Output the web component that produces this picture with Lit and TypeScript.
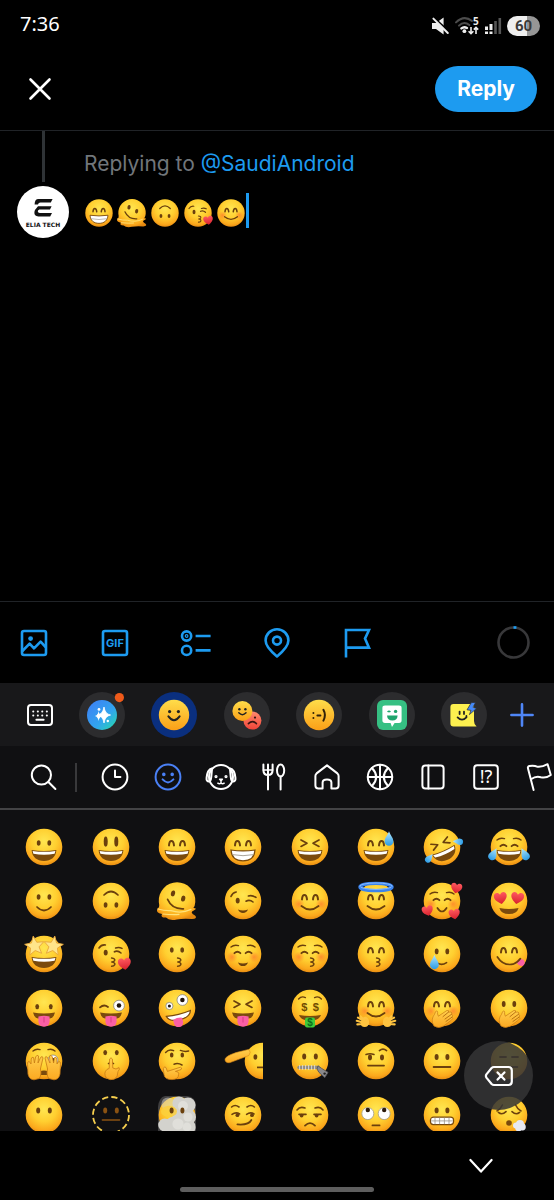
import { LitElement, html, svg, css } from "lit";
import { customElement } from "lit/decorators.js";

const INK = "#6b400d";

const ovals = (x = 5.3, y = -4, rx = 1.9, ry = 2.8) => svg`
  <ellipse cx=${-x} cy=${y} rx=${rx} ry=${ry} fill=${INK} />
  <ellipse cx=${x} cy=${y} rx=${rx} ry=${ry} fill=${INK} />`;

const line = (d: string, width = 1.6, color = INK) => svg`
  <path d=${d} fill="none" stroke=${color} stroke-width=${width} stroke-linecap="round" stroke-linejoin="round" />`;

const arches = line("M-8 -1.6C-7.6 -7.4 -3.6 -7.4 -3 -1.6M3 -1.6C3.6 -7.4 7.6 -7.4 8 -1.6", 2);
const lids = line("M-8.6 -0.8Q-5.6 -3.6 -2.6 -0.8M2.6 -0.8Q5.6 -3.6 8.6 -0.8", 1.8);
const brows = line("M-12 -7Q-9 -9.6 -4.5 -8.4M12 -7Q9 -9.6 4.5 -8.4", 1.4);
const squeezed = line("M-9 -7L-3 -3.8L-9 -0.6M9 -7L3 -3.8L9 -0.6", 1.7);
const grin = svg`
  <path d="M-12.4 3Q0 4.8 12.4 3C12 10 7 14 0 14S-12 10 -12.4 3Z" fill="#7a4a0d" />
  <path d="M-11.4 3.9Q0 5.6 11.4 3.9L10.6 6.8Q0 8.8 -10.6 6.8Z" fill="#fff" />`;
const smile = (y = 5, w = 8) => line(`M${-w} ${y}Q0 ${y + 7} ${w} ${y}`, 1.7);
const pucker = line("M0.6 4Q4.6 4.6 3.6 6.6Q2.8 7.8 0.8 8Q4.4 8.6 3.8 10.6Q3 12.2 0.6 12.2", 1.5);
const tongue = svg`
  <path d="M-11 4.6Q0 6.6 11 4.6Q10 9.6 6 10.6H-6Q-10 9.6 -11 4.6Z" fill="#7a4a0d" />
  <path d="M-5.6 8.6Q0 7 5.6 8.6V13.6Q5 18.8 0 18.8T-5.6 13.6Z" fill="#fa5fa5" />
  <path d="M0 9V14.5" stroke="#d93c83" stroke-width="1" />`;
const blush = svg`
  <circle cx="-11" cy="3" r="5.5" fill="url(#blush)" /><circle cx="11" cy="3" r="5.5" fill="url(#blush)" />`;
const heart = (x: number, y: number, s: number, turn = 0) => svg`
  <path transform="translate(${x} ${y}) rotate(${turn}) scale(${s})"
    d="M0 5.4C-3 3.2 -5.6 1.2 -5.6 -1.8C-5.6 -5.2 -1.4 -6 0 -2.8C1.4 -6 5.6 -5.2 5.6 -1.8C5.6 1.2 3 3.2 0 5.4Z" fill="url(#heart)" />`;
const drop = (x: number, y: number, s: number, turn = 0) => svg`
  <path transform="translate(${x} ${y}) rotate(${turn}) scale(${s})"
    d="M0 -7C1.5 -3 4.2 -0.5 4.2 2.6A4.2 4.2 0 0 1 -4.2 2.6C-4.2 -0.5 -1.5 -3 0 -7Z" fill="url(#drop)" />`;
const star = (x: number, turn: number) => svg`
  <path transform="translate(${x} -8) rotate(${turn})"
    d="M0 -10L2.7 -3.4L9.6 -3L4.3 1.5L6 8.2L0 4.6L-6 8.2L-4.3 1.5L-9.6 -3L-2.7 -3.4Z"
    fill="#ffe58a" stroke="#e8a83c" stroke-width="0.9" stroke-linejoin="round" />`;
const googly = (x: number, y: number, r: number) => svg`
  <circle cx=${x} cy=${y} r=${r} fill="#fff" stroke="#8a857a" stroke-width="0.8" />
  <circle cx=${x} cy=${y} r=${r * 0.42} fill="#20160c" />`;
const palm = svg`
  <path d="M-8 18C-11 13 -9.5 9 -7.6 6.6L-6.4 3.6Q-4 1.6 -4.4 6L-3.6 8.2L5 2.4Q7.4 2 6.4 4.2L9 4Q10.8 4.8 9.4 6.4Q11.8 6.8 10 9.2Q11.8 10.4 9.6 12L1.6 18Q-3.4 21 -8 18Z"
    fill="url(#hand)" stroke="#c87a14" stroke-width="0.7" />
  <path d="M6.4 4.2L1 8.6M9.4 6.4L3 11M10 9.2L4 13.4" stroke="#b06a10" stroke-width="0.9" fill="none" stroke-linecap="round" />`;
const disc = svg`<circle r="18.3" fill="url(#face)" />`;

const faces: Record<string, unknown> = {
  "grinning face": svg`${disc}${ovals()}${grin}`,
  "grinning face with big eyes": svg`${disc}${ovals(5.3, -5.4, 2, 5.2)}${grin}`,
  "grinning face with smiling eyes": svg`${disc}${arches}${grin}`,
  "beaming face": svg`${disc}${arches}
    <path d="M-12 3Q0 4.8 12 3C11.6 10 7 13.8 0 13.8S-11.6 10 -12 3Z" fill="#fff" stroke="#7a4a0d" stroke-width="1.2" />
    <path d="M-10.6 7.6Q0 9.8 10.6 7.6" fill="none" stroke="#a9a49b" stroke-width="1" />`,
  "squinting face": svg`${disc}${squeezed}${grin}`,
  "grinning face with sweat": svg`${disc}${arches}${grin}${drop(13, -8.4, 1.05)}`,
  "rolling on the floor laughing": svg`${disc}<g transform="rotate(-24)">${squeezed}${grin}</g>
    ${drop(-12.6, 11, 0.75, 40)}${drop(16, -5.4, 0.75, -85)}`,
  "face with tears of joy": svg`${disc}${brows}${lids}${grin}${drop(-15.6, 7, 0.95, 28)}${drop(15.6, 7, 0.95, -28)}`,
  "slightly smiling face": svg`${disc}${ovals(5.4, -4, 1.9, 2.8)}${smile(6, 7)}`,
  "upside-down face": svg`${disc}<g transform="rotate(180)">${ovals(5.4, -4, 1.9, 2.8)}${smile(6, 7)}</g>`,
  "melting face": svg`
    <path d="M-18.2 1A18.3 18.3 0 1 1 18.3 1Q18 5 16.4 7Q21 7.4 16.8 9.4Q12 11 18 14.4Q21 17.4 15 18Q6 17.4 0 18.4Q-8 20 -11 16.6Q-17 16.8 -15 13Q-22 11.4 -19.4 7.4Q-17 7 -18.2 1Z" fill="url(#face)" />
    <path d="M-19 8Q-12 10 -6 9.6Q4 13 14 8.4M-14 13Q-4 14 2 13.4" fill="none" stroke="#ffe27a" stroke-width="1.2" stroke-linecap="round" />
    <ellipse cx="-4" cy="-7.6" rx="2.1" ry="3" fill=${INK} transform="rotate(12 -4 -7.6)" />
    <ellipse cx="6.2" cy="-2.4" rx="2.1" ry="3" fill=${INK} transform="rotate(12 6.2 -2.4)" />
    ${line("M-9.4 -1.6Q-5 8.4 6.4 7.8", 1.7)}`,
  "winking face": svg`${disc}<ellipse cx="-5.3" cy="-0.4" rx="2" ry="2.9" fill=${INK} />
    ${line("M3 0.2Q6.6 -1.8 10 1M-12 -4.6Q-10.4 -8.4 -6.8 -9M5.4 -5Q9 -6.2 13 -3.6", 1.6)}
    <path d="M-5 8.6Q0 10.4 5 8.6Q3.6 12 0 12T-5 8.6Z" fill=${INK} />`,
  "smiling face with smiling eyes": svg`${disc}${blush}${arches}${smile(5, 8.6)}`,
  "smiling face with halo": svg`${disc}${arches}${smile(5, 8.6)}
    <ellipse cy="-14" rx="16" ry="3.6" fill="none" stroke="#3b84ee" stroke-width="3.4" />
    <ellipse cy="-14.8" rx="16.2" ry="3.2" fill="none" stroke="#8cc0ff" stroke-width="0.9" />`,
  "smiling face with hearts": svg`${disc}${blush}${brows}${lids}${smile(7, 4.6)}
    ${heart(14.4, -13, 1, 12)}${heart(-14.4, 9.6, 1, -14)}${heart(12.4, 13, 1, -8)}`,
  "smiling face with heart-eyes": svg`${disc}
    <path d="M-9.6 7Q0 8.8 9.6 7Q8 13 0 13T-9.6 7Z" fill="#7a4a0d" />${heart(-8.4, -3, 1.15, -10)}${heart(8.4, -3, 1.15, 10)}`,
  "star-struck": svg`${disc}${grin}${star(-9.4, -8)}${star(9.4, 8)}`,
  "face blowing a kiss": svg`${disc}<ellipse cx="-5.3" cy="-1.4" rx="2" ry="2.9" fill=${INK} />
    ${line("M3.4 -2.2Q6.6 -4 10 -1M-12 -6Q-9.6 -9.6 -5.6 -9M4.6 -6Q8 -7.2 11 -5.6", 1.6)}${pucker}${heart(13.6, 9.6, 1.15, -8)}`,
  "kissing face": svg`${disc}${ovals(5.2, -4, 1.9, 2.7)}${pucker}`,
  "smiling face, relaxed": svg`${disc}${blush}${brows}${lids}<path d="M-5 8.4Q0 10.4 5 8.4Q3.6 12 0 12T-5 8.4Z" fill=${INK} />`,
  "kissing face with closed eyes": svg`${disc}${blush}${brows}${lids}${pucker}`,
  "kissing face with smiling eyes": svg`${disc}${arches}${pucker}`,
  "smiling face with tear": svg`${disc}${ovals(5.3, -2.6, 1.9, 2.8)}${line("M-4 9.4Q0 11.6 4.6 8.6", 1.6)}${drop(-7.6, 8, 1.05)}`,
  "face savoring food": svg`${disc}${arches}
    <path d="M7 8.2Q9.6 3.4 14.2 5.6Q17.4 8.8 14 11.8Q10 12.4 7 8.2Z" fill="#fa5fa5" />${line("M-11.6 3Q-6 12 4 10.2Q8.4 9 11.4 4.6", 1.7)}`,
  "face with tongue": svg`${disc}${ovals(6.8, -1.4, 1.9, 2.7)}${tongue}`,
  "winking face with tongue": svg`${disc}${line("M-11 -0.6Q-7 -4.2 -3 -1", 1.8)}${googly(8, -2.4, 5.4)}${tongue}`,
  "zany face": svg`${disc}${googly(-7.6, -2, 3.6)}${googly(5.4, -8, 5.4)}
    <g transform="rotate(-14)"><path d="M-12.4 5.6Q0 7.4 12.4 5.6Q10.6 12 0 12T-12.4 5.6Z" fill="#fff" stroke="#7a4a0d" stroke-width="1.2" />
    <path d="M-6.6 10.6Q-2 9 2.6 10.6V15Q1.4 19.6 -2.4 19T-6.6 15Z" fill="#fa5fa5" /></g>`,
  "squinting face with tongue": svg`${disc}${squeezed}${tongue}`,
  "money-mouth face": svg`${disc}${line("M-11.4 -9Q-8.4 -12.4 -4.6 -10.4M4.6 -10.4Q8.4 -12.4 11.4 -9", 1.4)}
    <text class="money" x="-5.8" y="3" fill="#6f4b00">$</text><text class="money" x="5.8" y="3" fill="#6f4b00">$</text>
    <path d="M-11 7Q0 9 11 7Q9 11.6 5 12H-5Q-9 11.6 -11 7Z" fill="#7a4a0d" />
    <rect x="-5" y="9.4" width="10" height="10" rx="2" fill="#3fca3a" /><text class="bill" x="0" y="18" fill="#0c6d1a">$</text>`,
  "smiling face with open hands": svg`${disc}${blush}${arches}${smile(5, 8.6)}
    ${[-1, 1].map((side) => svg`<g transform="scale(${side} 1)">
      <path d="M8 16Q7.6 10.6 10.6 9.8Q12.4 9.8 12.4 11.6L15.6 8.2M13 12.4L18 9.6M14 14.2L19.2 12.8M14 16L18.6 16.4" fill="none" stroke="#ffc440" stroke-width="2.2" stroke-linecap="round" />
      <ellipse cx="11.4" cy="15" rx="4" ry="4" fill="#ffc440" /></g>`)}`,
  "face with hand over mouth, smiling": svg`${disc}${blush}${arches}${palm}`,
  "face with hand over mouth": svg`${disc}${ovals(5.3, -4, 1.9, 3)}${palm}`,
  "face with peeking eye": svg`${disc}${line("M-11 -10Q-8 -12.6 -4 -11.4M4 -11.4Q8 -12.6 11 -10", 1.4)}
    ${googly(9, -1, 5)}<path d="M-4 10.4Q0 8.4 4 10.4V14H-4Z" fill="#7a4a0d" />
    ${[-1, 1].map((side) => svg`<g transform="scale(${side} 1)">
      <path d="M5 17.6Q2 14 3.6 8L1 -3Q1.4 -5.6 3.4 -3.6L6 2L5.4 -5Q7 -7 8.4 -4L9.6 2L10.4 -3.4Q12.4 -4.6 12.8 -2L13 3L14.8 0.4Q17 0.6 16.4 3.6L16 13Q15 18.6 10 18.8Z"
        fill="url(#hand)" stroke="#c87a14" stroke-width="0.8" /></g>`)}`,
  "shushing face": svg`${disc}${ovals(5.8, -8.4, 1.9, 2.6)}${line("M-2.6 2.6Q0 1 2.6 2.6", 1.4)}
    <path d="M-1.4 -2Q0 -4.4 1.4 -2L1.8 7L5 8L8 6.6Q9.2 8 7 10.6Q7 16 3.4 18.2Q-1 19.6 -4.6 17Q-8 12 -4 8.4L-1.8 7.4Z" fill="url(#hand)" stroke="#c87a14" stroke-width="0.8" />`,
  "thinking face": svg`${disc}${ovals(5.3, -6, 1.8, 2.6)}${line("M-11.4 -8.6Q-8 -12.4 -3.4 -10.4M3.4 -10.6Q8 -9 11.6 -10", 1.5)}
    ${line("M-3 3.2Q1 1.6 5 4", 1.5)}
    <path d="M-13.6 7.6Q-12.6 4.6 -11 6.6L-9.6 10.4L3.4 6.2Q5.6 6.6 4 8.6L-1.6 10.4Q2.4 10.8 1.6 13.4Q1.6 18.4 -5 18.6Q-12.4 18.6 -13 13.6Z" fill="url(#hand)" stroke="#c87a14" stroke-width="0.8" />`,
  "saluting face": svg`
    <path d="M20 -18.3A18.3 18.3 0 0 0 20 18.3Z" fill="url(#halfface)" />
    <ellipse cx="12.4" cy="-4" rx="1.9" ry="2.8" fill=${INK} /><path d="M14 6.4H20" stroke=${INK} stroke-width="1.7" />
    <path d="M5.6 -11.6L-7 -8.4Q-17 -5 -18 -2Q-18 2.4 -13 1.6L-5 -1.4L6 -5.6Q8.6 -9 5.6 -11.6Z" fill="url(#hand)" stroke="#d98c18" stroke-width="0.6" />`,
  "zipper-mouth face": svg`${disc}${ovals(5.8, -4.4, 2, 3)}
    ${line("M-11 6.4H8", 3.4, "#8f8a80")}${line("M-10.4 4.4V8.6M-7.4 4.4V8.6M-4.4 4.4V8.6M-1.4 4.4V8.6M1.6 4.4V8.6M4.6 4.4V8.6", 1, "#d9d6cf")}
    <path d="M8 4.8L11.6 7.4L18 11.4L14.8 16.6L9 11.4L7 8Z" fill="#88888c" stroke="#55555a" stroke-width="0.9" /><circle cx="14.6" cy="12.6" r="1.2" fill="#222" />`,
  "face with raised eyebrow": svg`${disc}${ovals(6, -3.6, 2, 2.8)}${line("M-10 -6.6Q-6 -8 -2 -6.6M3.4 -10.4Q7 -13.4 10.6 -10.4", 1.6)}${line("M-8 4.6H8", 1.8)}`,
  "neutral face": svg`${disc}${ovals(5.4, -4, 2, 3)}${line("M-8.4 6H8.4", 1.8)}`,
  "expressionless face": svg`${disc}${line("M-9 -4H-3M3 -4H9M-8.4 6H8.4", 1.8)}`,
  "face without mouth": svg`${disc}${ovals(5.8, -4.4, 2, 3)}`,
  "dotted line face": svg`<circle r="18" fill="none" stroke="#f6cf4e" stroke-width="1.8" stroke-dasharray="6.2 3.2" />
    <ellipse cx="-5.8" cy="-4.4" rx="2" ry="3" fill="#8a5212" /><ellipse cx="5.8" cy="-4.4" rx="2" ry="3" fill="#8a5212" />
    ${line("M-8.6 5H8.6", 1.6, "#8a5212")}`,
  "face in clouds": svg`
    <path d="M-12 -19H10Q19 -18 19 -9V19H-19V-8Q-18 -18 -12 -19Z" fill="#6d6c6c" opacity=".5" />
    ${disc}
    <g fill="#d3d2cd"><circle cx="-9" cy="-11" r="6.6" opacity=".5" /><circle cx="2" cy="-12" r="6.6" /><circle cx="11" cy="-10" r="7.6" />
    <circle cx="11.6" cy="2" r="7.4" /><circle cx="10.6" cy="12" r="8" /><circle cx="-3" cy="11" r="9.6" /><circle cx="-12.4" cy="10" r="6.4" /><circle cx="4" cy="-1" r="9" /></g>
    <g fill="#e0dfda"><circle cx="6" cy="-9" r="5" /><circle cx="11" cy="2" r="4.6" /><circle cx="1" cy="9" r="5.6" /><circle cx="10" cy="12" r="4.4" /></g>
    <ellipse cx="-8" cy="-3.6" rx="8" ry="5.6" fill="#fccf3c" opacity=".85" />${ovals(5.4, -4.4, 2, 3)}`,
  "smirking face": svg`${disc}${line("M-11.4 -8Q-8 -11 -4 -8M4 -8Q8 -11 11.4 -8M-11 -0.6Q-7 -3.4 -3.4 -1M3.6 -0.6Q7.4 -3.4 11 -1", 1.6)}
    <circle cx="-5.6" cy="0.2" r="1.9" fill=${INK} /><circle cx="9" cy="0.2" r="1.9" fill=${INK} />${line("M-5.6 9.4Q5.6 10.4 8.4 5", 1.8)}`,
  "unamused face": svg`${disc}${line("M-13 -5Q-10 -9 -5 -7M5 -7Q10 -9 13 -5M-11 -0.6H-4M4 -0.6H11", 1.6)}
    <circle cx="-8.4" cy="0.6" r="1.9" fill=${INK} /><circle cx="6.6" cy="0.6" r="1.9" fill=${INK} />${line("M-5 10.6Q0 5.6 5 10.6", 1.8)}`,
  "face with rolling eyes": svg`${disc}<circle cx="-8.2" cy="-1.4" r="6" fill="#fff" stroke="#a19b8c" stroke-width="0.8" /><circle cx="8.2" cy="-1.4" r="6" fill="#fff" stroke="#a19b8c" stroke-width="0.8" />
    <circle cx="-8.2" cy="-5" r="2.2" fill="#2b1a0b" /><circle cx="8.2" cy="-5" r="2.2" fill="#2b1a0b" />${line("M-3.6 10.4H3.6", 1.7)}`,
  "grimacing face": svg`${disc}${ovals(5.4, -4.6, 2, 2.8)}
    <rect x="-11.6" y="2.2" width="23.2" height="7.4" rx="3" fill="#fff" stroke="#7a4a0d" stroke-width="1.2" />
    <path d="M-11 5.9H11M-7 2.6V9.2M-2.4 2.6V9.2M2.4 2.6V9.2M7 2.6V9.2" stroke="#99958c" stroke-width="0.8" />`,
  "face exhaling": svg`${disc}${line("M-12 -4Q-8.6 -5.6 -6.6 -10M12 -4Q8.6 -5.6 6.6 -10M-10.6 -2.6Q-7 0.4 -3 -3.4M3 -3.4Q7 0.4 10.6 -2.6", 1.6)}
    <circle cx="0" cy="8" r="2.8" fill="#7a4a0d" /><g fill="#e7e9f2"><circle cx="7" cy="10.6" r="3" /><circle cx="11" cy="9" r="4" /><circle cx="13.4" cy="12" r="3.4" /><circle cx="9.6" cy="13" r="3.4" /></g>`,
};

const typed = ["beaming face", "melting face", "upside-down face", "face blowing a kiss", "smiling face with smiling eyes"];

@customElement("app-root")
export class AppRoot extends LitElement {
  static styles = css`
    :host {
      display: flex;
      flex-direction: column;
      min-height: 100vh;
      background: #000;
      color: #fff;
      font-family: Inter, "Noto Sans", sans-serif;
      overflow: hidden;
    }
    button {
      appearance: none;
      border: 0;
      margin: 0;
      padding: 0;
      background: none;
      color: inherit;
      font: inherit;
      display: flex;
      align-items: center;
      justify-content: center;
      flex: none;
      cursor: pointer;
    }
    svg { display: block; flex: none; overflow: visible; }
    .defs { width: 0; height: 0; position: absolute; }
    .status {
      display: flex;
      align-items: center;
      height: 42px;
      padding: 5px 14px 0 20px;
      gap: 6px;
      font-family: "Noto Sans", sans-serif;
    }
    .time { font-size: 20px; line-height: 24px; margin-right: auto; padding-bottom: 4px; }
    .tiny { font: 700 10px "Noto Sans", sans-serif; }
    .battery {
      width: 33px;
      height: 20px;
      border-radius: 10px;
      background: linear-gradient(90deg, #eee 60%, #969696 60%);
      color: #3a3a3a;
      font: 700 15px/20px Roboto, sans-serif;
      text-align: center;
    }
    .top {
      display: flex;
      align-items: center;
      justify-content: space-between;
      height: 83px;
      padding: 0 17px 0 26px;
      border-bottom: 1px solid #202327;
    }
    .close { width: 28px; height: 46px; }
    .reply {
      height: 46px;
      padding: 0 22px;
      border-radius: 23px;
      background: #1d9bf0;
      font-size: 21px;
      font-weight: 700;
    }
    .compose { flex: 1; display: flex; padding-left: 17px; }
    .rail { width: 52px; display: flex; flex-direction: column; align-items: center; gap: 4px; }
    .thread { width: 3px; height: 51px; background: #2f3336; }
    .logo { font: 700 6px "DejaVu Sans", sans-serif; text-anchor: middle; }
    .body { flex: 1; padding: 18px 16px 0 15px; }
    .to { margin: 0; font-size: 21px; line-height: 30px; color: #71767b; }
    .to a { color: #1d9bf0; text-decoration: none; }
    .editor { display: flex; align-items: center; gap: 3px; height: 40px; margin-top: 14px; outline: none; }
    .editor svg { width: 30px; height: 30px; }
    .caret { width: 3px; height: 35px; background: #1d9bf0; margin-left: -3px; align-self: flex-start; }
    .tools {
      display: flex;
      align-items: center;
      height: 81px;
      padding: 0 24px 0 20px;
      gap: 53px;
      border-top: 1px solid #202327;
      color: #1d9bf0;
    }
    .tool { width: 28px; height: 32px; }
    .gif { font: 700 11px Inter, sans-serif; text-anchor: middle; }
    .ring { margin-left: auto; }
    .modes {
      display: flex;
      align-items: center;
      height: 63px;
      padding: 0 18px 0 26px;
      background: #18181a;
      box-sizing: border-box;
    }
    .kb { width: 28px; height: 46px; }
    .packs { flex: 1; display: flex; justify-content: space-between; padding: 0 21px 0 25px; }
    .pack { width: 46px; height: 46px; border-radius: 50%; background: #2c2c2e; }
    .pack.on { background: #0a2f7e; }
    .plus { width: 28px; height: 46px; color: #4f86f7; }
    .tabs {
      display: flex;
      align-items: center;
      height: 62px;
      padding-left: 24px;
      background: #101012;
      border-bottom: 2px solid #434345;
      overflow: hidden;
    }
    .find { width: 38px; height: 46px; }
    .split { width: 2px; height: 29px; margin: 0 11px 0 13px; background: #39393b; flex: none; }
    .tab { width: 53px; height: 46px; }
    .tab.on { color: #4a80f5; }
    .punct { font: 400 18px "Noto Sans", sans-serif; text-anchor: middle; }
    .panel { position: relative; height: 321px; padding: 17px 12px 0 11px; background: #101012; overflow: hidden; box-sizing: border-box; }
    .grid { display: grid; grid-template-columns: repeat(8, 1fr); grid-auto-rows: 40px; align-content: space-between; height: 308px; }
    .grid svg { width: 40px; height: 40px; }
    .erase {
      position: absolute;
      right: 21px;
      bottom: 21px;
      width: 69px;
      height: 69px;
      border-radius: 50%;
      background: rgba(52, 52, 54, 0.86);
    }
    .money { font: 700 11px "Liberation Sans", sans-serif; text-anchor: middle; }
    .bill { font: 700 10px "Liberation Sans", sans-serif; text-anchor: middle; }
    .nav { display: flex; flex-direction: column; align-items: center; height: 69px; }
    .hide { align-self: flex-end; width: 40px; height: 40px; margin: 15px 53px 1px 0; }
    .home { width: 194px; height: 5px; border-radius: 3px; background: #5e5e5e; }
  `;

  private icon(w: number, h: number, body: unknown, stroke = 2) {
    return html`<svg width=${w} height=${h} viewBox="0 0 ${w} ${h}" fill="none" stroke="currentColor" stroke-width=${stroke}
      stroke-linecap="round" stroke-linejoin="round" aria-hidden="true">${body}</svg>`;
  }

  private emoji(name: string) {
    return html`<svg viewBox="-20 -20 40 40" role="img" aria-label=${name}>${faces[name]}</svg>`;
  }

  private tab(label: string, body: unknown, on = false) {
    return html`<button class="tab ${on ? "on" : ""}" aria-label=${label}>${this.icon(28, 28, body)}</button>`;
  }

  private pack(label: string, body: unknown, on = false) {
    return html`<button class="pack ${on ? "on" : ""}" aria-label=${label}>
      <svg width="46" height="46" viewBox="0 0 46 46" aria-hidden="true">${body}</svg>
    </button>`;
  }

  render() {
    return html`
      <svg class="defs" aria-hidden="true">
        <defs>
          <radialGradient id="face" cx=".5" cy=".34" r=".68">
            <stop offset="0" stop-color="#ffe651" /><stop offset=".5" stop-color="#ffcf30" />
            <stop offset=".84" stop-color="#fba81c" /><stop offset="1" stop-color="#e38710" />
          </radialGradient>
          <radialGradient id="halfface" gradientUnits="userSpaceOnUse" cx="20" cy="-6" r="25">
            <stop offset="0" stop-color="#ffe651" /><stop offset=".5" stop-color="#ffcf30" />
            <stop offset=".84" stop-color="#fba81c" /><stop offset="1" stop-color="#e38710" />
          </radialGradient>
          <radialGradient id="blush"><stop offset="0" stop-color="#ff6a2b" stop-opacity=".6" /><stop offset="1" stop-color="#ff6a2b" stop-opacity="0" /></radialGradient>
          <linearGradient id="heart" x2="0" y2="1"><stop stop-color="#ff5a60" /><stop offset="1" stop-color="#d8202c" /></linearGradient>
          <linearGradient id="drop" x2="0" y2="1"><stop stop-color="#b5e8fc" /><stop offset="1" stop-color="#2a9be6" /></linearGradient>
          <linearGradient id="hand" x2="0" y2="1"><stop stop-color="#ffcf4e" /><stop offset="1" stop-color="#fca821" /></linearGradient>
          <linearGradient id="sun" x2="0" y2="1"><stop stop-color="#ffdd4a" /><stop offset="1" stop-color="#fb9f17" /></linearGradient>
          <linearGradient id="red" x2="0" y2="1"><stop stop-color="#ff8a6e" /><stop offset="1" stop-color="#f04438" /></linearGradient>
          <linearGradient id="magic" x2="1" y2="1"><stop stop-color="#3f7cf5" /><stop offset=".6" stop-color="#31a5ee" /><stop offset="1" stop-color="#25e0a4" /></linearGradient>
        </defs>
      </svg>

      <div class="status">
        <span class="time">7:36</span>
        <svg width="17" height="18" viewBox="0 0 17 18" aria-label="Muted">
          <path d="M0 6H4L11.6 0.4V17.6L4 12H0Z" fill="#eee" /><path d="M1 -0.4L17 14.8" stroke="#000" stroke-width="2" />
          <path d="M1.4 1.6L15.8 16" stroke="#eee" stroke-width="2" stroke-linecap="round" />
        </svg>
        <svg width="24" height="18" viewBox="0 0 24 18" aria-label="Wi-Fi">
          <g fill="none" stroke-width="2" stroke-linecap="round"><path d="M1 5.4Q9 -2.4 17 4M4 8.6Q9 3.6 14.4 8" stroke="#4c4c4c" /><path d="M6.4 11.4Q9 9.2 12 11" stroke="#eee" stroke-width="2.4" /></g>
          <circle cx="9.4" cy="14.2" r="1.9" fill="#eee" /><text class="tiny" x="18" y="8" fill="#eee">5</text>
          <path d="M16 10V16.4M13.6 14.2L16 16.6L18.4 14.2M21 17V10.6M18.8 12.6L21 10.4L23.2 12.6" fill="none" stroke="#eee" stroke-width="1.6" />
        </svg>
        <svg width="16" height="18" viewBox="0 0 16 18" aria-label="Signal">
          <path d="M1.5 9.5V13M1.5 14.4V17M6 7V13M6 14.4V17" stroke="#eee" stroke-width="3" /><path d="M10.5 4V17M14.8 1V17" stroke="#555" stroke-width="2.6" />
        </svg>
        <span class="battery">60</span>
      </div>

      <header class="top">
        <button class="close" aria-label="Close">${this.icon(22, 22, svg`<path d="M1.5 1.5L20.5 20.5M20.5 1.5L1.5 20.5" />`, 2.6)}</button>
        <button class="reply">Reply</button>
      </header>

      <main class="compose">
        <div class="rail">
          <div class="thread"></div>
          <svg width="52" height="52" viewBox="0 0 52 52" role="img" aria-label="Elia Tech">
            <circle cx="26" cy="26" r="26" fill="#fff" />
            <path d="M21.4 13H35.6L33.8 16.4H23.4Q21.4 16.4 21 18.4H17.6Q17.8 13 21.4 13ZM21 20.2H34.6L33 23.6H22.4Q20.8 24 20.8 25.6Q20.8 27 22.8 27H35L33.2 30.4H21.4Q17 30.4 17.4 26Q17.6 23.6 19.2 22.4Z" fill="#111" />
            <text class="logo" x="26" y="40.5" fill="#111">ELIA TECH</text>
          </svg>
        </div>
        <div class="body">
          <p class="to">Replying to <a href="#">@SaudiAndroid</a></p>
          <div class="editor" role="textbox" aria-label="Post your reply" tabindex="0">
            ${typed.map((name) => this.emoji(name))}<span class="caret"></span>
          </div>
        </div>
      </main>

      <div class="tools">
        <button class="tool" aria-label="Photos">${this.icon(28, 28, svg`<rect x="2" y="2" width="24" height="24" rx="2" />
          <circle cx="10.6" cy="9.6" r="2.4" fill="currentColor" stroke="none" /><path d="M2.4 22L9.6 14.6L14 19.4L20.6 12.6L25.6 18" />`, 2.6)}</button>
        <button class="tool" aria-label="GIF">${this.icon(28, 28, svg`<rect x="2" y="2" width="24" height="24" rx="2" />
          <text class="gif" x="14" y="18" fill="currentColor" stroke="none">GIF</text>`, 2.6)}</button>
        <button class="tool" aria-label="Poll">${this.icon(28, 28, svg`<circle cx="4.6" cy="7" r="4.6" /><circle cx="4.6" cy="7" r="0.6" />
          <circle cx="4.6" cy="21.4" r="4.6" /><path stroke-linecap="butt" d="M13.6 7H28.6M13.6 21.4H28.6" />`, 2.6)}</button>
        <button class="tool" aria-label="Location">${this.icon(28, 30, svg`<path d="M14 28.4C8 23.6 2.6 18.4 2.6 12.6A11.4 11.4 0 0 1 25.4 12.6C25.4 18.4 20 23.6 14 28.4Z" /><circle cx="14" cy="12.6" r="4" />`, 2.6)}</button>
        <button class="tool" aria-label="Flag">${this.icon(28, 28, svg`<path stroke-linejoin="miter" stroke-linecap="butt" d="M2 28.6V1H25L21 9.6L25 18.6H2" />`, 2.6)}</button>
        <svg class="ring" width="33" height="33" viewBox="0 0 33 33" fill="none" aria-label="Characters used">
          <circle cx="16.5" cy="16.5" r="15" stroke="#38383a" stroke-width="2.6" /><path d="M16.5 1.5H19.4" stroke="#1d9bf0" stroke-width="2.6" />
        </svg>
      </div>

      <div class="modes">
        <button class="kb" aria-label="Keyboard">${this.icon(26, 22, svg`<rect x="1" y="1" width="24" height="20" rx="3" />
          <path d="M6.2 7.4H6.3M10.8 7.4H10.9M15.2 7.4H15.3M19.8 7.4H19.9M6.2 11.4H6.3M10.8 11.4H10.9M15.2 11.4H15.3M19.8 11.4H19.9M9.4 15.8H16.6" />`)}</button>
        <div class="packs">
          ${this.pack("Creative", svg`<circle cx="23" cy="23" r="15" fill="url(#magic)" />
            <path d="M25 15Q26 22 31.6 23Q26 24 25 31Q24 24 18.4 23Q24 22 25 15Z" fill="#fff" stroke="#fff" stroke-width=".8" />
            <path d="M19.6 19Q20.2 23.4 23.6 24Q20.2 24.8 19.6 29Q19 24.8 15.8 24Q19 23.4 19.6 19Z" fill="#fff" /><circle cx="20" cy="17.4" r="1.4" fill="#fff" /><circle cx="28.8" cy="29" r="1.2" fill="#fff" />
            <circle cx="40.4" cy="5.6" r="4.6" fill="#ee5a1a" />`)}
          ${this.pack("Emoji", svg`<circle cx="23" cy="23" r="15.2" fill="url(#sun)" /><circle cx="18.6" cy="19.6" r="1.6" fill="#222" /><circle cx="27.4" cy="19.6" r="1.6" fill="#222" />
            <path d="M17.4 24.4Q23 32 28.6 24.4" fill="none" stroke="#222" stroke-width="2" stroke-linecap="round" />`, true)}
          ${this.pack("Combine", svg`<circle cx="28.4" cy="28.6" r="9" fill="url(#red)" /><path d="M24.4 31.6Q28.6 27.6 32.4 31.6" fill="none" stroke="#3a1512" stroke-width="1.6" stroke-linecap="round" />
            <circle cx="31" cy="25.6" r="1.1" fill="#3a1512" />
            <circle cx="18.4" cy="19" r="10" fill="url(#sun)" /><circle cx="15.4" cy="17.2" r="1.2" fill="#222" /><circle cx="21.4" cy="17.2" r="1.2" fill="#222" />
            <path d="M14.8 20.8Q18.4 24.6 22 20.8" fill="none" stroke="#222" stroke-width="1.5" stroke-linecap="round" />`)}
          ${this.pack("Emoticons", svg`<circle cx="23" cy="23" r="15.2" fill="url(#sun)" />
            <g fill="none" stroke="#332208" stroke-width="2" stroke-linecap="round"><path d="M17.4 21V21.1M17.4 26V26.1M21.4 23.6H24.4" /><path d="M27.4 17.8Q30.4 23 27.4 28.6" /></g>`)}
          ${this.pack("Avatar stickers", svg`<rect x="8" y="8" width="30" height="30" rx="6" fill="#36c083" />
            <path d="M16 13.6H30Q32.6 13.6 32.6 16V28.6Q32.6 31 30 31H25.6L23 35L21.6 31H16Q13.4 31 13.4 28.6V16Q13.4 13.6 16 13.6Z" fill="#fff" />
            <path d="M18 23.4H28.6Q28.4 28.4 23.4 28.4T18 23.4Z" fill="#21a56d" /><path d="M18.6 20Q20 18.4 21.4 20" stroke="#21a56d" fill="none" stroke-width="1.5" /><circle cx="26.6" cy="19.4" r="1.7" fill="#21a56d" />`)}
          ${this.pack("Stickers", svg`<path d="M12.4 12H31Q33 12 33 14V29Q33 32.4 35.6 34.6H12.4Q9.4 34.6 9.4 31.6V15Q9.4 12 12.4 12Z" fill="#fdf04f" />
            <path d="M18.6 19.6V22M23 19.6V22M16.6 25.4Q21 29.8 25.4 25.4V24" stroke="#222" stroke-width="1.8" fill="none" stroke-linecap="round" />
            <path d="M30.4 10.6L26 17.8L30 18.4L28.4 22.6L35.6 16.4L32 15.2L34.6 10.4Z" fill="#4589f7" stroke="#2c2c2e" stroke-width=".7" />`)}
        </div>
        <button class="plus" aria-label="Add">${this.icon(24, 24, svg`<path d="M12 1.4V22.6M1.4 12H22.6" />`, 2.6)}</button>
      </div>

      <nav class="tabs">
        <button class="find" aria-label="Search">${this.icon(28, 28, svg`<circle cx="12.4" cy="12" r="9.6" /><path d="M19.4 19L26.4 26" />`, 2)}</button>
        <span class="split"></span>
        ${this.tab("Recent", svg`<circle cx="14" cy="14" r="12.4" /><path d="M14 7.6V14H19.4" />`)}
        ${this.tab("Smileys", svg`<circle cx="14" cy="14" r="12.4" /><circle cx="9.8" cy="11.4" r=".8" fill="currentColor" /><circle cx="18.2" cy="11.4" r=".8" fill="currentColor" /><path d="M8.6 16.4Q14 22.4 19.4 16.4" />`, true)}
        ${this.tab("Animals", svg`<circle cx="14" cy="14" r="12" /><path d="M4.8 5.4Q0.4 6.4 -0.4 14.6Q-0.8 18 1.2 18.4Q3.8 18.6 4.2 14.4L5 6M23.2 5.4Q27.6 6.4 28.4 14.6Q28.8 18 26.8 18.4Q24.2 18.6 23.8 14.4L23 6" />
          <circle cx="9" cy="13.6" r=".6" fill="currentColor" /><circle cx="19" cy="13.6" r=".6" fill="currentColor" /><path d="M12.6 16.2H15.4L14 17.6ZM14 17.6V20M10.8 20.2Q12.6 21.4 14 20Q15.4 21.4 17.2 20.2" stroke-width="1.5" />`)}
        ${this.tab("Food", svg`<path d="M3.4 1.6V7.4Q3.6 12 8 12T12.6 7.4V1.6M8 1.6V26.4M8 12V26.4" /><path d="M3.4 7H12.6" stroke-width="1.4" /><ellipse cx="20.6" cy="7.6" rx="3.6" ry="6" /><path d="M20.6 13.6V26.4" />`)}
        ${this.tab("Places", svg`<path d="M14 2.4L24.4 10.4Q25.6 11.4 25.6 13V22.6Q25.6 25.6 22.6 25.6H18.4V19.6Q18.4 16.4 14 16.4T9.6 19.6V25.6H5.4Q2.4 25.6 2.4 22.6V13Q2.4 11.4 3.6 10.4Z" />`)}
        ${this.tab("Activities", svg`<circle cx="14" cy="14" r="12.2" /><path d="M14 1.8V26.2M1.8 14H26.2M6 5Q14.4 14 6 23M22 5Q13.6 14 22 23" />`)}
        ${this.tab("Objects", svg`<rect x="3.4" y="2.4" width="21.2" height="23.2" rx="3" /><path d="M9.4 2.4V25.6" />`)}
        ${this.tab("Symbols", svg`<rect x="2.2" y="2.2" width="23.6" height="23.6" rx="3" /><text class="punct" x="14" y="20.4" fill="currentColor" stroke="none">!?</text>`)}
        ${this.tab("Flags", svg`<path d="M3 5.4L8.6 27M3 5.4Q2.4 3.6 4.4 3Q8.6 2 12.8 3.8Q17 4.2 22.6 1.2L25.8 12Q21 15.6 15.8 14.2Q11 12.6 6 16.2" />`)}
      </nav>

      <section class="panel" aria-label="Emoji">
        <div class="grid">${Object.keys(faces).map((name) => html`<button aria-label=${name}>${this.emoji(name)}</button>`)}</div>
        <button class="erase" aria-label="Delete">${this.icon(28, 20, svg`<path d="M9 1H23.4Q26.8 1 26.8 4.4V15.6Q26.8 19 23.4 19H9Q7.6 19 6.6 18L1.4 11.6Q0.4 10 1.4 8.4L6.6 2Q7.6 1 9 1ZM12.6 6.4L19.4 13.6M19.4 6.4L12.6 13.6" />`, 2.2)}</button>
      </section>

      <footer class="nav">
        <button class="hide" aria-label="Hide keyboard">${this.icon(24, 14, svg`<path d="M1.4 1L12 12.6L22.6 1" />`, 2.2)}</button>
        <div class="home"></div>
      </footer>
    `;
  }
}
